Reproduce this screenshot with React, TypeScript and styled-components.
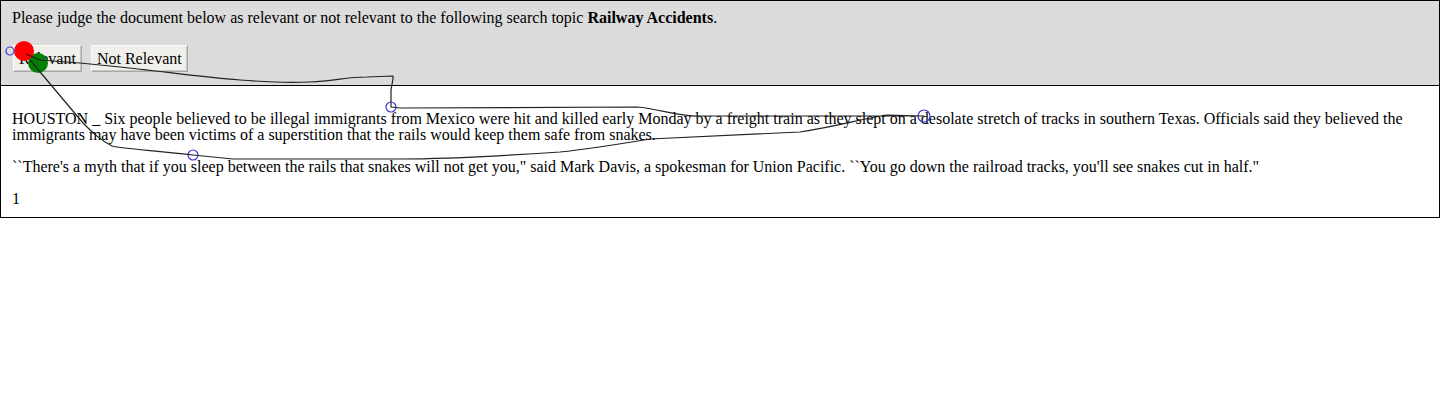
import React from "react";
import styled, { createGlobalStyle } from "styled-components";

const GlobalStyle = createGlobalStyle`
  html, body {
    margin: 0;
    padding: 0;
    background: #ffffff;
  }
  body {
    font-family: "Liberation Serif", "Times New Roman", serif;
    font-size: 16px;
    line-height: 16px;
    color: #000000;
  }
`;

const Page = styled.div`
  position: relative;
  width: 1440px;
`;

const Frame = styled.div`
  box-sizing: border-box;
  width: 1440px;
  border: 1px solid #000;
`;

const Header = styled.div`
  background: #dcdcdc;
  padding: 9px 11px 13px;
  border-bottom: 1px solid #000;
`;

const Prompt = styled.p`
  margin: 0;
  line-height: 16px;
`;

const ButtonRow = styled.div`
  display: flex;
  gap: 9px;
  margin: 19px 0 0 1px;
`;

const JudgeButton = styled.button`
  box-sizing: border-box;
  height: 27px;
  margin: 0;
  padding: 0 5px;
  font-family: "Liberation Serif", "Times New Roman", serif;
  font-size: 16px;
  color: #000;
  background: #f0efeb;
  border: 1px solid #a8a8a8;
  border-top-color: #fafafa;
  border-left-color: #fafafa;
  box-shadow: inset -1px -1px 0 #c8c8c8;
  cursor: pointer;
`;

const Doc = styled.div`
  padding: 25px 11px 10px;
`;

const Para = styled.p`
  margin: 0 0 16px;
  line-height: 16px;

  &:last-child {
    margin-bottom: 0;
  }
`;

const Trail = styled.svg`
  position: absolute;
  left: 0;
  top: 0;
  pointer-events: none;
  overflow: visible;
`;

const trailPath =
  "M 26 54 L 40 60 L 80 63 L 120 67 C 160 71, 200 77, 240 80 C 265 82, 290 83, 310 82 " +
  "C 335 81, 345 77, 367 77 L 393 76 L 393 79 L 391 90 L 391 107 L 400 108 L 637 107 " +
  "C 660 109, 680 117, 700 116 L 924 116 L 887 115 C 860 119, 840 126, 800 132 L 650 139 " +
  "C 620 144, 590 149, 560 152 C 500 156, 440 159, 400 159 L 233 159 L 193 155 " +
  "C 150 150, 125 149, 112 146 C 100 140, 92 132, 83 123 L 30 60";

const markers = [
  { x: 10, y: 51, r: 4 },
  { x: 391, y: 107, r: 5 },
  { x: 193, y: 155, r: 5 },
  { x: 924, y: 116, r: 6 },
];

const MouseTrail: React.FC = () => (
  <Trail width={1440} height={400} viewBox="0 0 1440 400">
    <circle cx={38} cy={63} r={10} fill="#008000" />
    <circle cx={24} cy={51} r={10} fill="#ff0000" />
    {markers.map((m, i) => (
      <circle key={i} cx={m.x} cy={m.y} r={m.r} fill="none" stroke="#3a3ad0" strokeWidth={1.2} />
    ))}
    <path d={trailPath} fill="none" stroke="#222" strokeWidth={1.2} strokeLinejoin="round" />
  </Trail>
);

const App: React.FC = () => {
  return (
    <Page>
      <GlobalStyle />
      <Frame>
        <Header>
          <Prompt>
            Please judge the document below as relevant or not relevant to the following search topic{" "}
            <b>Railway Accidents</b>.
          </Prompt>
          <ButtonRow>
            <JudgeButton>Relevant</JudgeButton>
            <JudgeButton>Not Relevant</JudgeButton>
          </ButtonRow>
        </Header>
        <Doc>
          <Para>
            HOUSTON _ Six people believed to be illegal immigrants from Mexico were hit and killed early Monday by a
            freight train as they slept on a desolate stretch of tracks in southern Texas. Officials said they believed
            the immigrants may have been victims of a superstition that the rails would keep them safe from snakes.
          </Para>
          <Para>
            ``There's a myth that if you sleep between the rails that snakes will not get you," said Mark Davis, a
            spokesman for Union Pacific. ``You go down the railroad tracks, you'll see snakes cut in half."
          </Para>
          <Para>1</Para>
        </Doc>
      </Frame>
      <MouseTrail />
    </Page>
  );
};

export default App;
